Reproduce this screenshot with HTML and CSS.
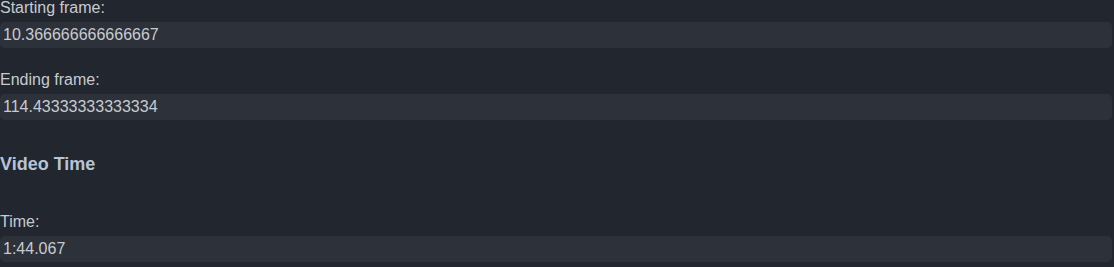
FILE: index.html
```html
<!DOCTYPE html>
<html lang="en">
<head>
<meta charset="utf-8">
<title>Frames</title>
<link rel="stylesheet" href="styles.css">
</head>
<body>
<div class="panel">
  <div class="field">
    <label class="label" for="start">Starting frame:</label>
    <input class="value" id="start" type="text" value="10.366666666666667" readonly>
  </div>
  <div class="field field-next">
    <label class="label" for="end">Ending frame:</label>
    <input class="value" id="end" type="text" value="114.43333333333334" readonly>
  </div>
  <h3 class="section-title">Video Time</h3>
  <div class="field">
    <label class="label" for="time">Time:</label>
    <input class="value" id="time" type="text" value="1:44.067" readonly>
  </div>
</div>
</body>
</html>
```
FILE: styles.css
```css
html, body {
  margin: 0;
  padding: 0;
  background: #22262e;
  height: 100%;
  overflow: hidden;
}
.panel {
  display: flex;
  flex-direction: column;
  padding-right: 2px;
  font-family: "Liberation Sans", Arial, sans-serif;
}
.field {
  display: flex;
  flex-direction: column;
  gap: 6px;
}
.field-next {
  margin-top: 24px;
}
.label {
  font-size: 16px;
  line-height: 16px;
  color: #c7cbd1;
}
.value {
  box-sizing: border-box;
  width: 100%;
  height: 26px;
  margin: 0;
  padding: 4px 3px;
  border: none;
  border-radius: 5px;
  outline: none;
  background: #2d3139;
  color: #c7cbd1;
  font-family: "Liberation Sans", Arial, sans-serif;
  font-size: 16px;
  line-height: 18px;
}
.section-title {
  margin: 34px 0 40px 0;
  font-size: 18px;
  line-height: 20px;
  font-weight: bold;
  color: #b7c3d7;
}
```
